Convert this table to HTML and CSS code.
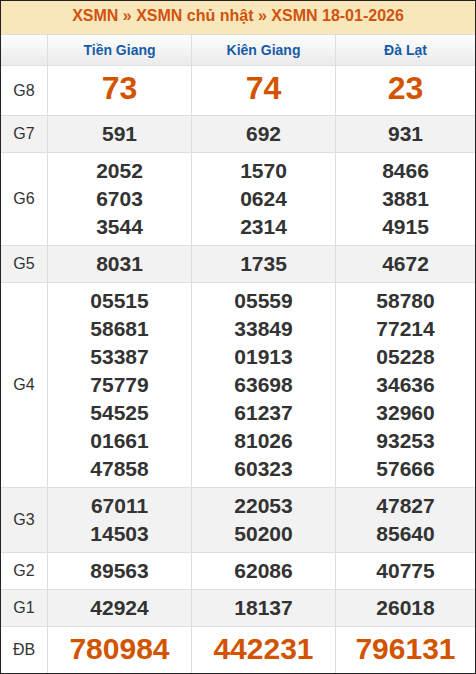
FILE: index.html
```html
<!DOCTYPE html>
<html lang="vi">
<head>
<meta charset="utf-8">
<title>XSMN 18-01-2026</title>
<link rel="stylesheet" href="styles.css">
</head>
<body>
<div class="board">
  <div class="title">XSMN » XSMN chủ nhật » XSMN 18-01-2026</div>
  <div class="row head">
    <div class="lbl"></div>
    <div class="prov">Tiền Giang</div>
    <div class="prov">Kiên Giang</div>
    <div class="prov">Đà Lạt</div>
  </div>
  <div class="row g8">
    <div class="lbl">G8</div>
    <div class="num big">73</div>
    <div class="num big">74</div>
    <div class="num big">23</div>
  </div>
  <div class="row alt">
    <div class="lbl">G7</div>
    <div class="num">591</div>
    <div class="num">692</div>
    <div class="num">931</div>
  </div>
  <div class="row">
    <div class="lbl">G6</div>
    <div class="num">2052<br>6703<br>3544</div>
    <div class="num">1570<br>0624<br>2314</div>
    <div class="num">8466<br>3881<br>4915</div>
  </div>
  <div class="row alt">
    <div class="lbl">G5</div>
    <div class="num">8031</div>
    <div class="num">1735</div>
    <div class="num">4672</div>
  </div>
  <div class="row">
    <div class="lbl">G4</div>
    <div class="num">05515<br>58681<br>53387<br>75779<br>54525<br>01661<br>47858</div>
    <div class="num">05559<br>33849<br>01913<br>63698<br>61237<br>81026<br>60323</div>
    <div class="num">58780<br>77214<br>05228<br>34636<br>32960<br>93253<br>57666</div>
  </div>
  <div class="row alt">
    <div class="lbl">G3</div>
    <div class="num">67011<br>14503</div>
    <div class="num">22053<br>50200</div>
    <div class="num">47827<br>85640</div>
  </div>
  <div class="row">
    <div class="lbl">G2</div>
    <div class="num">89563</div>
    <div class="num">62086</div>
    <div class="num">40775</div>
  </div>
  <div class="row alt">
    <div class="lbl">G1</div>
    <div class="num">42924</div>
    <div class="num">18137</div>
    <div class="num">26018</div>
  </div>
  <div class="row db">
    <div class="lbl">ĐB</div>
    <div class="num jackpot">780984</div>
    <div class="num jackpot">442231</div>
    <div class="num jackpot">796131</div>
  </div>
</div>
</body>
</html>
```
FILE: styles.css
```css
* { box-sizing: border-box; }
html, body { margin: 0; padding: 0; background: #fff; }
body { font-family: "Liberation Sans", Arial, sans-serif; color: #333; }

.board {
  width: 476px;
  height: 674px;
  border: 1px solid #222;
  background: #dedede;
  display: flex;
  flex-direction: column;
  gap: 1px;
}

.title {
  height: 33px;
  background: #f7e7ba;
  color: #d0530f;
  font-weight: bold;
  font-size: 16px;
  line-height: 30px;
  padding-bottom: 3px;
  text-align: center;
}

.row {
  display: grid;
  grid-template-columns: 46px 143px 143px 1fr;
  gap: 1px;
}
.row > div { background: #fff; }
.row.alt > div { background: #f2f2f2; }

.head > div {
  background: linear-gradient(#fdfdfd, #ebebeb);
  height: 30px;
}
.prov {
  color: #165ca8;
  font-weight: bold;
  font-size: 14px;
  line-height: 30px;
  text-align: center;
}

.lbl {
  display: flex;
  align-items: center;
  justify-content: center;
  font-size: 16px;
  color: #333;
}

.num {
  text-align: center;
  font-weight: bold;
  font-size: 21px;
  line-height: 28px;
  padding: 4px 0;
  color: #333;
}

.num.big {
  font-size: 32px;
  line-height: 41px;
  padding: 2px 0 6px;
  color: #d35400;
}

.num.jackpot {
  font-size: 30px;
  line-height: 38px;
  padding: 3px 0 5px;
  color: #d35400;
}
```
